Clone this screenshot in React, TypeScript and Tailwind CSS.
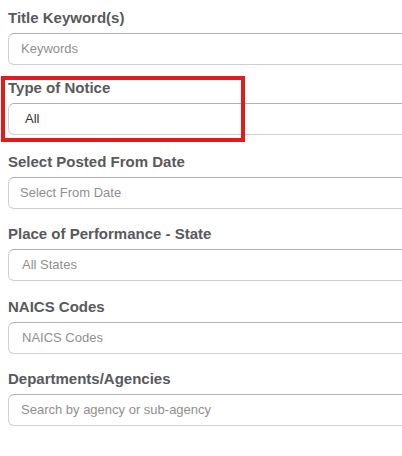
const fields = [
  { label: 'Title Keyword(s)', text: 'Keywords', filled: false, pad: 'pl-[12px]', gap: 'mb-[14px]' },
  { label: 'Type of Notice', text: 'All', filled: true, pad: 'pl-[16px]', gap: 'mb-[17.5px]' },
  { label: 'Select Posted From Date', text: 'Select From Date', filled: false, pad: 'pl-[11px]', gap: 'mb-[16.5px]' },
  { label: 'Place of Performance - State', text: 'All States', filled: false, pad: 'pl-[13px]', gap: 'mb-[16.5px]' },
  { label: 'NAICS Codes', text: 'NAICS Codes', filled: false, pad: 'pl-[13px]', gap: 'mb-[16.5px]' },
  { label: 'Departments/Agencies', text: 'Search by agency or sub-agency', filled: false, pad: 'pl-[12px]', gap: 'mb-[16.5px]' },
]

export default function App() {
  return (
    <div
      className="relative h-[456px] w-[402px] overflow-hidden bg-white px-2 pt-[9px]"
      style={{ fontFamily: '"Liberation Sans", Arial, sans-serif' }}
    >
      {fields.map(({ label, text, filled, pad, gap }) => (
        <div key={label} className={gap}>
          <div className="mb-[7px] text-[15px] font-bold leading-[17px] text-[#58595b]">{label}</div>
          <div
            className={`flex h-[32px] w-[440px] items-center rounded-[6px] border border-[#cfcfcf] border-t-[#b0b0b0] ${pad} text-[13px] ${
              filled ? 'text-[#333]' : 'text-[#8f8f8f]'
            }`}
          >
            {text}
          </div>
        </div>
      ))}

      {/* highlight box */}
      <div className="pointer-events-none absolute left-[1px] top-[76px] h-[66px] w-[244px] border-4 border-[#e21c1c]" />
    </div>
  )
}
